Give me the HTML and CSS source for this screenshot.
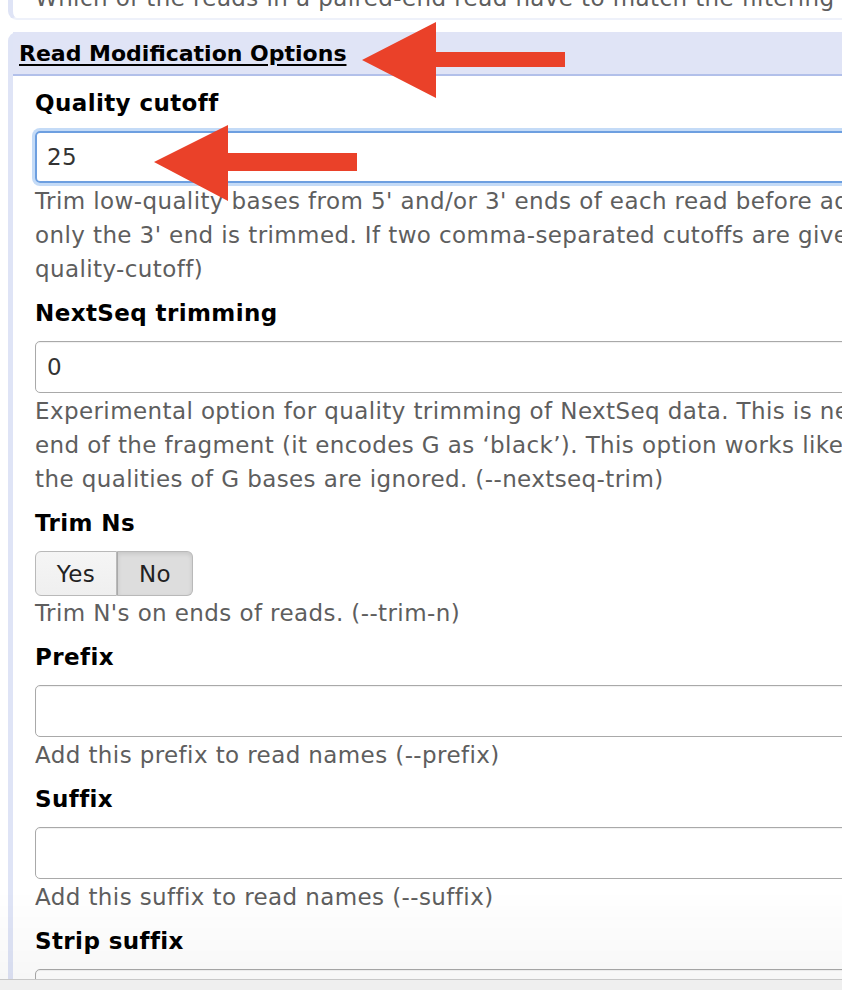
FILE: index.html
```html
<!DOCTYPE html>
<html>
<head>
<meta charset="utf-8">
<link rel="stylesheet" href="styles.css">
</head>
<body>
<div class="page">
  <div class="prev-section">
    <div class="help prev-help">Which of the reads in a paired-end read have to match the filtering criterion? (--pair-filter)</div>
  </div>

  <div class="section">
    <div class="section-header"><span class="section-title">Read Modification Options</span></div>
    <div class="section-body">
      <div class="field">
        <div class="label">Quality cutoff</div>
        <div class="input focused">25</div>
        <div class="help">Trim low-quality bases from 5' and/or 3' ends of each read before adapter removal. If one value is given,<br>only the 3' end is trimmed. If two comma-separated cutoffs are given, the 5' end is trimmed with the first cutoff (--<br>quality-cutoff)</div>
      </div>
      <div class="field">
        <div class="label">NextSeq trimming</div>
        <div class="input">0</div>
        <div class="help">Experimental option for quality trimming of NextSeq data. This is necessary because that machine cannot distinguish<br>end of the fragment (it encodes G as ‘black’). This option works like regular quality trimming except that<br>the qualities of G bases are ignored. (--nextseq-trim)</div>
      </div>
      <div class="field">
        <div class="label">Trim Ns</div>
        <div class="btn-group">
          <span class="btn">Yes</span><span class="btn active">No</span>
        </div>
        <div class="help">Trim N's on ends of reads. (--trim-n)</div>
      </div>
      <div class="field">
        <div class="label">Prefix</div>
        <div class="input"></div>
        <div class="help">Add this prefix to read names (--prefix)</div>
      </div>
      <div class="field">
        <div class="label">Suffix</div>
        <div class="input"></div>
        <div class="help">Add this suffix to read names (--suffix)</div>
      </div>
      <div class="field">
        <div class="label">Strip suffix</div>
        <div class="input"></div>
      </div>
    </div>
  </div>
</div>

<svg class="arrow arrow-one" width="210" height="80" viewBox="0 0 210 80">
  <polygon points="0,38 74,0 74,30 203,30 203,45 74,45 74,76" fill="#ea4129"/>
</svg>
<svg class="arrow arrow-two" width="210" height="80" viewBox="0 0 210 80">
  <polygon points="0,37 74,0 74,28 203,28 203,46 74,46 74,76" fill="#ea4129"/>
</svg>

<div class="bottom-fade"></div>
<div class="bottom-bar"></div>
</body>
</html>
```

FILE: styles.css
```css
html, body {
  margin: 0;
  padding: 0;
  background: #ffffff;
  overflow: hidden;
  width: 842px;
  height: 990px;
}

.page {
  width: 1400px;
  font-family: "DejaVu Sans", "Liberation Sans", sans-serif;
  font-size: 23px;
  letter-spacing: 0.4px;
  line-height: 34px;
  color: #000;
}

.prev-section {
  margin-left: 8px;
  margin-top: -19px;
  height: 39px;
  border-left: 5px solid #dfe4f6;
  border-bottom: 2px solid #eef1fa;
  border-bottom-left-radius: 9px;
  padding-left: 22px;
  box-sizing: border-box;
  overflow: hidden;
}

.prev-help {
  white-space: nowrap;
}

.section {
  margin-top: 12px;
  margin-left: 8px;
  border-left: 5px solid #dfe4f6;
  border-top-left-radius: 9px;
}

.section-header {
  background: #e0e4f6;
  height: 42px;
  border-bottom: 2px solid #b2c0ea;
  padding-left: 6px;
  display: flex;
  align-items: center;
}

.section-title {
  font-weight: bold;
  font-size: 22px;
  letter-spacing: 0;
  text-decoration: underline;
  text-underline-offset: 3px;
  padding-top: 2px;
}

.section-body {
  padding: 10px 0 0 22px;
}

.field {
  margin-bottom: 10px;
  width: 1300px;
}

.label {
  font-weight: bold;
  height: 34px;
  margin-bottom: 11px;
}

.input {
  height: 50px;
  border: 1px solid #a9a9a9;
  border-radius: 5px;
  box-shadow: inset 0 1px 1px rgba(0,0,0,0.06);
  padding-left: 11px;
  line-height: 50px;
  color: #333;
  margin-bottom: 1px;
}

.input.focused {
  border: 2px solid #6d9fe0;
  height: 48px;
  line-height: 48px;
  padding-left: 10px;
  box-shadow: 0 0 0 3px #c4dbf7;
  margin-bottom: 1px;
}

.help {
  color: #5e5e5e;
  white-space: nowrap;
}

.btn-group {
  display: flex;
  height: 45px;
}

.btn {
  display: flex;
  align-items: center;
  justify-content: center;
  height: 43px;
  border: 1px solid #b9b9b9;
  background: linear-gradient(#f5f5f5, #efefef);
  color: #222;
}

.btn:first-child {
  width: 80px;
  border-radius: 6px 0 0 6px;
}

.btn.active {
  width: 74px;
  border-left: 1px solid #a9a9a9;
  border-radius: 0 6px 6px 0;
  background: #dddddd;
  box-shadow: inset 0 2px 4px rgba(0,0,0,0.1);
}

.arrow {
  position: absolute;
}

.arrow-one {
  left: 362px;
  top: 22px;
}

.arrow-two {
  left: 154px;
  top: 125px;
}

.bottom-fade {
  position: fixed;
  left: 0;
  right: 0;
  bottom: 11px;
  height: 90px;
  background: linear-gradient(rgba(0,0,0,0), rgba(0,0,0,0.03));
  pointer-events: none;
}

.bottom-bar {
  position: fixed;
  left: 0;
  right: 0;
  bottom: 0;
  height: 10px;
  background: #efefef;
  border-top: 1px solid #c8c8c8;
}
```
